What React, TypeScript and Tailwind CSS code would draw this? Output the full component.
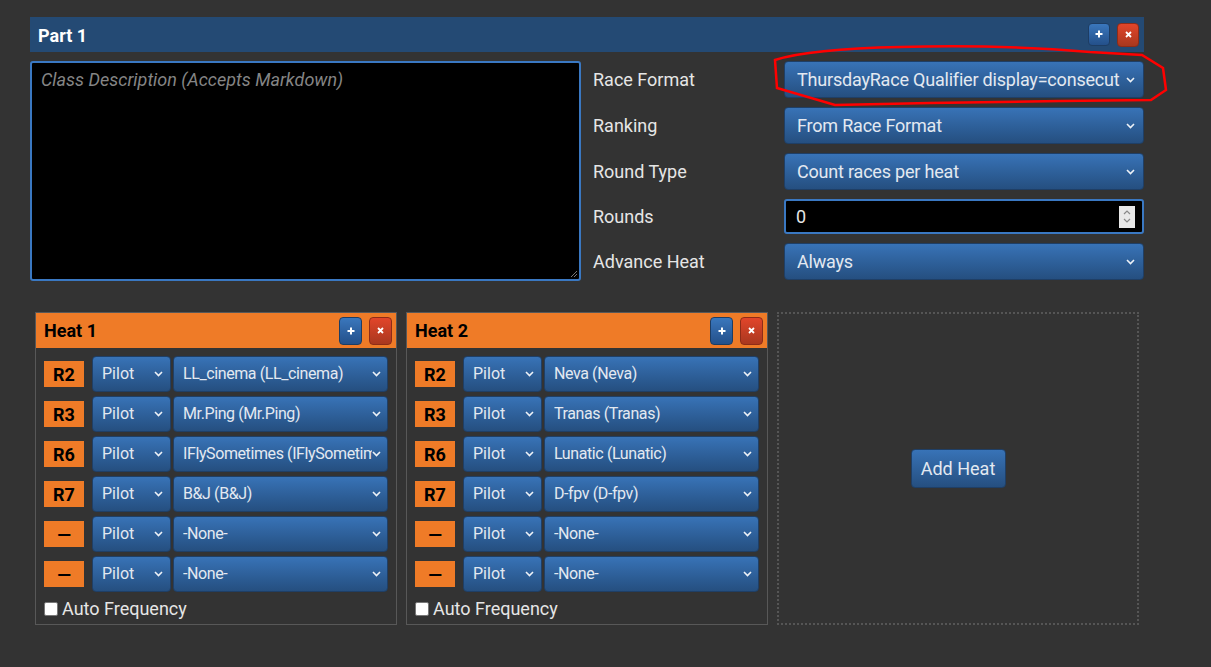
import React from 'react';

const font = { fontFamily: 'Roboto, "Noto Sans", sans-serif' };

type Slot = { ch: string; pilot: string };

const heats: { name: string; slots: Slot[] }[] = [
  {
    name: 'Heat 1',
    slots: [
      { ch: 'R2', pilot: 'LL_cinema (LL_cinema)' },
      { ch: 'R3', pilot: 'Mr.Ping (Mr.Ping)' },
      { ch: 'R6', pilot: 'IFlySometimes (IFlySometim' },
      { ch: 'R7', pilot: 'B&J (B&J)' },
      { ch: '—', pilot: '-None-' },
      { ch: '—', pilot: '-None-' },
    ],
  },
  {
    name: 'Heat 2',
    slots: [
      { ch: 'R2', pilot: 'Neva (Neva)' },
      { ch: 'R3', pilot: 'Tranas (Tranas)' },
      { ch: 'R6', pilot: 'Lunatic (Lunatic)' },
      { ch: 'R7', pilot: 'D-fpv (D-fpv)' },
      { ch: '—', pilot: '-None-' },
      { ch: '—', pilot: '-None-' },
    ],
  },
];

function Chevron() {
  return (
    <svg width="9" height="6" viewBox="0 0 9 6" className="shrink-0">
      <path d="M1 1 L4.5 4.5 L8 1" fill="none" stroke="#eef2f7" strokeWidth="1.6" />
    </svg>
  );
}

function Select({ value, className, text = 'text-[18px] pl-3 pr-2' }: { value: string; className: string; text?: string }) {
  return (
    <div
      className={`flex items-center rounded-[4px] border border-[#1f3f66] bg-gradient-to-b from-[#3873b7] to-[#254f80] text-[#e3e9f1] ${text} ${className}`}
    >
      <span className="min-w-0 flex-1 overflow-hidden whitespace-nowrap">{value}</span>
      <Chevron />
    </div>
  );
}

function SmallBtn({ kind, className }: { kind: 'add' | 'del'; className: string }) {
  return (
    <div
      className={`flex items-center justify-center rounded-[4px] border text-white font-bold ${
        kind === 'add'
          ? 'border-[#1d3d64] bg-gradient-to-b from-[#3a77bd] to-[#24508a]'
          : 'border-[#8e2c18] bg-gradient-to-b from-[#e2452a] to-[#a9381f]'
      } ${className}`}
    >
      {kind === 'add' ? (
        <svg width="8" height="8" viewBox="0 0 8 8">
          <path d="M4 0.5 V7.5 M0.5 4 H7.5" stroke="#fff" strokeWidth="2" />
        </svg>
      ) : (
        <svg width="7" height="7" viewBox="0 0 7 7">
          <path d="M1 1 L6 6 M6 1 L1 6" stroke="#fff" strokeWidth="1.8" />
        </svg>
      )}
    </div>
  );
}

function HeatCard({ name, slots }: { name: string; slots: Slot[] }) {
  return (
    <div className="flex h-[313px] w-[362px] flex-col border border-[#585858]">
      <div className="flex h-[35px] items-center justify-between bg-[#ef7b27] pl-[8px] pr-[4px]">
        <span className="text-[18px] font-bold text-black">{name}</span>
        <div className="flex gap-[7px]">
          <SmallBtn kind="add" className="h-[28px] w-[23px]" />
          <SmallBtn kind="del" className="h-[28px] w-[23px]" />
        </div>
      </div>
      <div className="flex flex-col gap-[4px] pl-[8px] pr-[8px] pt-[8px]">
        {slots.map((s, i) => (
          <div key={i} className="flex h-[36px] items-center">
            <div className="flex h-[26px] w-[40px] items-center justify-center bg-[#ef7b27] text-[18px] font-bold text-black">
              {s.ch}
            </div>
            <Select value="Pilot" className="ml-[8px] h-[36px] w-[79px]" text="text-[16px] pl-[9px] pr-[7px]" />
            <Select value={s.pilot} className="ml-[2px] h-[36px] w-[215px]" text="text-[16px] tracking-[-0.4px] pl-[9px] pr-[6px]" />
          </div>
        ))}
      </div>
      <label className="mt-[3px] flex items-center pl-[8px] text-[18px] text-[#e6e6e6]">
        <span className="mr-[4px] inline-block h-[14px] w-[14px] rounded-[2px] border border-[#777] bg-white" />
        Auto Frequency
      </label>
    </div>
  );
}

export default function App() {
  const fields = [
    { label: 'Race Format', value: 'ThursdayRace Qualifier display=consecut' },
    { label: 'Ranking', value: 'From Race Format' },
    { label: 'Round Type', value: 'Count races per heat' },
    { label: 'Rounds', value: '0', input: true },
    { label: 'Advance Heat', value: 'Always' },
  ];

  return (
    <div className="relative h-[667px] w-full overflow-hidden bg-[#333333]" style={font}>
      <div className="ml-[30px] w-[1114px] pt-[17px]">
        {/* Part header */}
        <div className="flex h-[35px] items-center justify-between bg-[#244a74] pl-[8px] pr-[5px]">
          <span className="pt-[1px] text-[18px] font-bold text-white">Part 1</span>
          <div className="flex gap-[7px]">
            <SmallBtn kind="add" className="h-[23px] w-[22px]" />
            <SmallBtn kind="del" className="h-[24px] w-[22px]" />
          </div>
        </div>

        <div className="mt-[9px] flex">
          <div className="relative h-[220px] w-[551px] rounded-[3px] border-2 border-[#3a78c2] bg-black px-[9px] pt-[3px]">
            <span className="text-[18px] italic text-[#858585]">Class Description (Accepts Markdown)</span>
            <svg className="absolute bottom-[1px] right-[1px]" width="9" height="9" viewBox="0 0 9 9">
              <path d="M8 2 L2 8 M8 5 L5 8" stroke="#777" strokeWidth="1" />
            </svg>
          </div>

          <div className="ml-[12px] flex flex-col gap-[9px]">
            {fields.map((f) => (
              <div key={f.label} className="flex items-center">
                <span className="w-[191px] text-[18px] text-[#e6e6e6]">{f.label}</span>
                {f.input ? (
                  <div className="flex h-[35px] w-[360px] items-center rounded-[3px] border-2 border-[#3a78c2] bg-black pl-[10px] pr-[7px] text-[18px] text-[#e6e6e6]">
                    <span className="flex-1">{f.value}</span>
                    <div className="flex h-[22px] w-[16px] flex-col items-center justify-center gap-[3px] bg-[#e8e8e8]">
                      <svg width="8" height="5" viewBox="0 0 8 5">
                        <path d="M1 4 L4 1 L7 4" fill="none" stroke="#888" strokeWidth="1.2" />
                      </svg>
                      <svg width="8" height="5" viewBox="0 0 8 5">
                        <path d="M1 1 L4 4 L7 1" fill="none" stroke="#888" strokeWidth="1.2" />
                      </svg>
                    </div>
                  </div>
                ) : (
                  <Select value={f.value} className="h-[37px] w-[360px]" text="text-[18px] tracking-[-0.2px] pl-3 pr-2" />
                )}
              </div>
            ))}
          </div>
        </div>

        {/* Heats */}
        <div className="ml-[5px] mt-[31px] flex gap-[9px]">
          {heats.map((h) => (
            <HeatCard key={h.name} name={h.name} slots={h.slots} />
          ))}
          <div className="flex h-[313px] w-[362px] items-center justify-center border-2 border-dotted border-[#555]">
            <div className="flex h-[39px] w-[95px] items-center justify-center rounded-[4px] border border-[#1f3f66] bg-gradient-to-b from-[#3873b7] to-[#254f80] text-[18px] text-[#e3e9f1]">
              Add Heat
            </div>
          </div>
        </div>
      </div>

      {/* red hand-drawn annotation */}
      <svg className="pointer-events-none absolute left-0 top-0" width="1211" height="667">
        <path
          d="M775 60 C800 52 850 48 900 47 C960 45 1030 47 1090 52 L1142 55 L1163 68 L1166 90 L1151 100 L1060 101 L930 103 L835 105 L777 88 Z"
          fill="none"
          stroke="#ff0000"
          strokeWidth="2.5"
        />
      </svg>
    </div>
  );
}
